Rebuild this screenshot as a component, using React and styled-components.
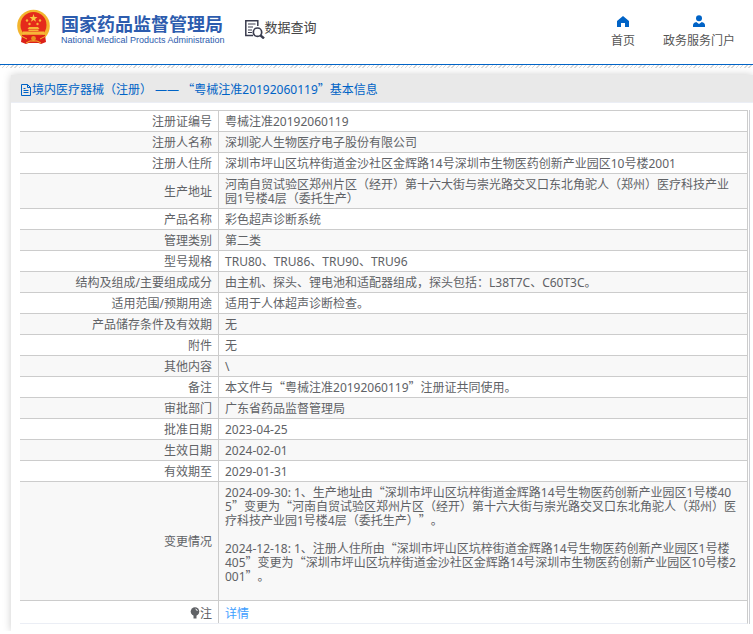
import React from "react";
import styled, { createGlobalStyle } from "styled-components";

const CJK = `"Noto Sans CJK SC", sans-serif`;
const BLUE = "#0063c6";

const GlobalStyle = createGlobalStyle`
  body {
    margin: 0;
    background: #fff;
    color: #606266;
    font: 12px/14px "Noto Sans", ${CJK};
    text-spacing-trim: space-all;
    overflow-x: hidden;
  }
`;

const Header = styled.header`
  box-sizing: border-box;
  height: 65px;
  padding: 0 18px 0 16px;
  display: flex;
  justify-content: space-between;
  border-bottom: 1px solid ${BLUE};
`;

const Brand = styled.div`
  display: flex;
`;

const Logo = styled.a`
  display: flex;
  gap: 10px;
  padding-top: 9px;
  color: #2d5cae;
  text-decoration: none;
`;

const LogoText = styled.div`
  padding-top: 4px;
  white-space: nowrap;
`;

const LogoName = styled.div`
  font: bold 18px/20px ${CJK};
`;

const LogoEnglish = styled.div`
  padding-top: 1px;
  font: 9px/12px "Liberation Sans", sans-serif;
`;

const Section = styled.div`
  display: flex;
  margin-left: 20px;
  padding-top: 17px;
  color: #444;
  font: 13px/20px ${CJK};
`;

const Nav = styled.nav`
  display: flex;
  gap: 28px;
  padding-top: 15px;
`;

const NavLink = styled.a`
  display: flex;
  flex-direction: column;
  align-items: center;
  gap: 6px;
  color: #555;
  text-decoration: none;
`;

const Hatch = styled.div`
  height: 3px;
  background: repeating-linear-gradient(
    135deg,
    #d8d8d8 0,
    #d8d8d8 1px,
    #fff 1px,
    #fff 3px
  );
`;

const Panel = styled.main`
  margin: 7px 0 0 11px;
  padding-bottom: 7px;
  background: #fff;
  box-shadow: 0 0 8px #ccc;
`;

const Title = styled.h1`
  box-sizing: border-box;
  display: flex;
  align-items: center;
  height: 28px;
  margin: 0;
  padding: 2px 0 0 9px;
  border-bottom: 1px solid #ebeef5;
  background: #e9e9e9;
  color: ${BLUE};
  font-size: 12px;
  font-weight: normal;
`;

const Frame = styled.div`
  margin: 7px 3px 0 9px;
  padding-right: 1px;
  border-right: 1px solid #cdced3;
`;

const Table = styled.table`
  width: 100%;
  border-collapse: separate;
  border-spacing: 0;
  border-right: 1px solid #ccc;
  border-bottom: 1px solid #ebeef5;
`;

const Row = styled.tr`
  background: ${({ $striped }) => ($striped ? "#f8f8f8" : "#fff")};
`;

const Label = styled.th`
  width: 186px;
  padding: 4px 6px 2px;
  border-top: 1px solid #ccc;
  font-weight: normal;
  text-align: right;
`;

const Value = styled.td`
  padding: 4px 11px 2px 6px;
  border-top: 1px solid #ccc;
  border-left: 1px solid #ccc;
  white-space: pre-line;
  word-break: break-all;
`;

const Quote = styled.span`
  font-family: ${CJK};
  line-height: 0;
`;

const NoteRow = styled(Row)`
  height: 23px;

  ${Label}, ${Value} {
    padding-top: 5px;
  }
`;

const DetailLink = styled.a`
  color: #409eff;
  text-decoration: none;
`;

const Bulb = styled.svg`
  vertical-align: -1px;
`;

const ROWS = [
  ["注册证编号", "粤械注准20192060119"],
  ["注册人名称", "深圳驼人生物医疗电子股份有限公司"],
  [
    "注册人住所",
    "深圳市坪山区坑梓街道金沙社区金辉路14号深圳市生物医药创新产业园区10号楼2001"
  ],
  [
    "生产地址",
    "河南自贸试验区郑州片区（经开）第十六大街与崇光路交叉口东北角驼人（郑州）医疗科技产业园1号楼4层（委托生产）"
  ],
  ["产品名称", "彩色超声诊断系统"],
  ["管理类别", "第二类"],
  ["型号规格", "TRU80、TRU86、TRU90、TRU96"],
  [
    "结构及组成/主要组成成分",
    "由主机、探头、锂电池和适配器组成，探头包括：L38T7C、C60T3C。"
  ],
  ["适用范围/预期用途", "适用于人体超声诊断检查。"],
  ["产品储存条件及有效期", "无"],
  ["附件", "无"],
  ["其他内容", "\\"],
  ["备注", "本文件与“粤械注准20192060119”注册证共同使用。"],
  ["审批部门", "广东省药品监督管理局"],
  ["批准日期", "2023-04-25"],
  ["生效日期", "2024-02-01"],
  ["有效期至", "2029-01-31"],
  [
    "变更情况",
    "2024-09-30: 1、生产地址由“深圳市坪山区坑梓街道金辉路14号生物医药创新产业园区1号楼405”变更为“河南自贸试验区郑州片区（经开）第十六大街与崇光路交叉口东北角驼人（郑州）医疗科技产业园1号楼4层（委托生产）”。\n\n2024-12-18: 1、注册人住所由“深圳市坪山区坑梓街道金辉路14号生物医药创新产业园区1号楼405”变更为“深圳市坪山区坑梓街道金沙社区金辉路14号深圳市生物医药创新产业园区10号楼2001”。\n\n"
  ]
];

// quotation marks take the full-width form of the Chinese font
function ChineseText({ text }) {
  return text
    .split(/([“”])/)
    .map((part, i) =>
      part === "“" || part === "”" ? <Quote key={i}>{part}</Quote> : part
    );
}

function Emblem() {
  return (
    <svg width="35" height="36" viewBox="0 0 35 36" aria-hidden="true">
      <circle cx="17.5" cy="17" r="16.3" fill="#f3b52e" />
      <path d="M6 26 Q17 22 29 26 L30 33 L25 35 L20 33 H15 L10 35 L5 33Z" fill="#dc2018" />
      <circle cx="17.5" cy="16" r="13" fill="#e52a1b" />
      <path
        d="M17.5 5 18.5 8 21.5 8 19.1 9.9 20 12.8 17.5 11 15 12.8 15.9 9.9 13.5 8 16.5 8Z"
        fill="#f9c943"
      />
      <g fill="#f7b638">
        <circle cx="11" cy="11.5" r="1.2" />
        <circle cx="24" cy="11.5" r="1.2" />
        <circle cx="13.5" cy="15" r="1.2" />
        <circle cx="21.5" cy="15" r="1.2" />
        <path d="M13 18h9l1.5 2h-12zM12.5 20.5h10V22h-10zM7 22.5h21v3.3H7z" />
      </g>
      <path d="M8 28q9.5-4 19 0v4l-5 2h-9l-5-2z" fill="#dc2018" />
      <circle cx="17.5" cy="29.5" r="2.4" fill="#e8941f" />
      <path d="M5 27l6 3M30 27l-6 3M10 34l4-2h7l4 2" stroke="#f3b52e" fill="none" />
    </svg>
  );
}

function SearchDocIcon() {
  return (
    <svg width="20" height="22" viewBox="0 0 20 22" fill="none" stroke="#3a3c4e" aria-hidden="true">
      <path d="M8 18.5H.8V3.8h12V9" strokeWidth="1.5" />
      <path d="M3 7h7.5M3 10h5M3 13h4M3 15.5h4" />
      <circle cx="12.5" cy="15.2" r="4.2" strokeWidth="1.7" />
      <path d="M15.5 18.3l3.5 3.2" strokeWidth="2.4" />
    </svg>
  );
}

function HomeIcon() {
  return (
    <svg width="14" height="13" viewBox="0 0 14 13" fill={BLUE} aria-hidden="true">
      <path d="M7 1 1 6V12h4V8h4v4h4V6z" />
    </svg>
  );
}

function UserIcon() {
  return (
    <svg width="14" height="13" viewBox="0 0 14 13" fill={BLUE} aria-hidden="true">
      <circle cx="7" cy="3.3" r="3" />
      <path d="M1 12V9.8Q1.3 7.4 4.2 7L7 9 9.8 7Q12.7 7.4 13 9.8V12z" />
    </svg>
  );
}

function DocIcon() {
  return (
    <svg width="12" height="12" viewBox="0 0 12 12" fill="none" stroke={BLUE} aria-hidden="true">
      <path d="M1.5.5h6l3 3v8h-9zM7.5.5v3h3" />
      <path d="M3.5 4.5h2M3.5 6.5h5M3.5 8.5h5" />
    </svg>
  );
}

function App() {
  return (
    <>
      <GlobalStyle />
      <Header>
        <Brand>
          <Logo href="#">
            <Emblem />
            <LogoText>
              <LogoName>国家药品监督管理局</LogoName>
              <LogoEnglish>National Medical Products Administration</LogoEnglish>
            </LogoText>
          </Logo>
          <Section>
            <SearchDocIcon />
            <span>数据查询</span>
          </Section>
        </Brand>
        <Nav>
          <NavLink href="#">
            <HomeIcon />
            首页
          </NavLink>
          <NavLink href="#">
            <UserIcon />
            政务服务门户
          </NavLink>
        </Nav>
      </Header>
      <Hatch />
      <Panel>
        <Title>
          <DocIcon />
          <span>
            <ChineseText text="境内医疗器械（注册） —— “粤械注准20192060119”基本信息" />
          </span>
        </Title>
        <Frame>
          <Table>
            <tbody>
              {ROWS.map(([label, value], i) => (
                <Row key={label} $striped={i % 2 === 1}>
                  <Label scope="row">{label}</Label>
                  <Value>
                    <ChineseText text={value} />
                  </Value>
                </Row>
              ))}
              <NoteRow>
                <Label scope="row">
                  <Bulb width="10" height="12" viewBox="0 0 10 12" aria-hidden="true">
                    <circle cx="5" cy="4.5" r="4.3" fill="#606266" />
                    <path d="M3.5 8h3v3.5h-3z" fill="#606266" />
                    <path d="M5.5 2q1.5.3 1.8 2" stroke="#fff" fill="none" />
                  </Bulb>
                  注
                </Label>
                <Value>
                  <DetailLink href="#">详情</DetailLink>
                </Value>
              </NoteRow>
            </tbody>
          </Table>
        </Frame>
      </Panel>
    </>
  );
}

export default App;
